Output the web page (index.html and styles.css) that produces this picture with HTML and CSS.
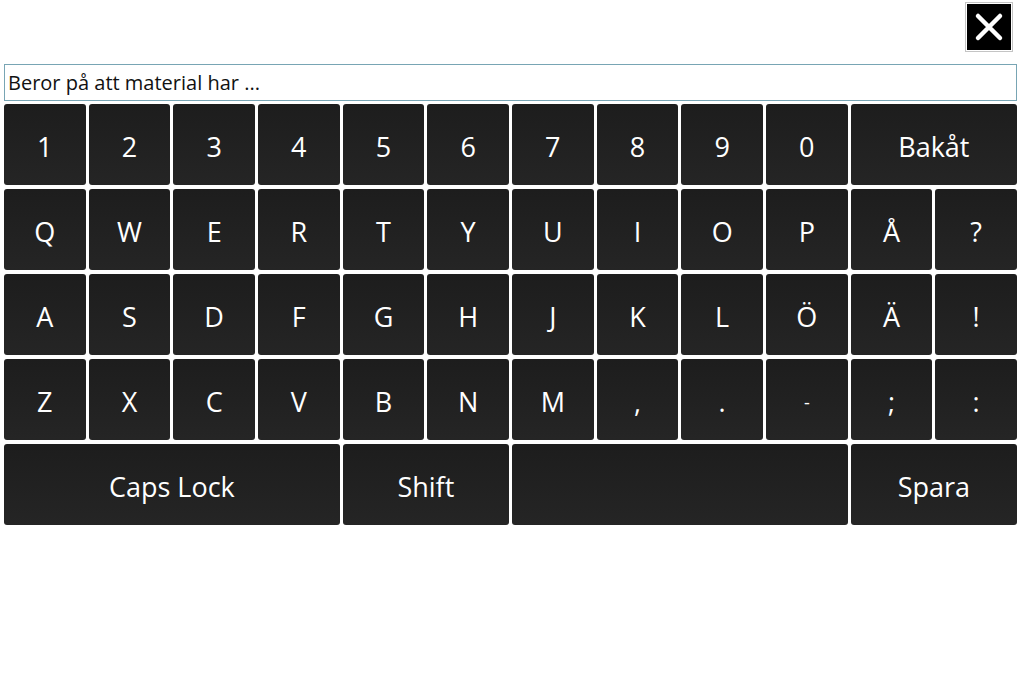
FILE: index.html
```html
<!DOCTYPE html>
<html>

<head>
    <title>Tangentbord</title>
    <link rel="stylesheet" href="styles.css">
</head>

<body>
    <div class="top">
        <button class="close" aria-label="Stäng">
            <svg width="32" height="32" viewBox="0 0 32 32">
                <path d="M5 5 L27 27 M27 5 L5 27" stroke="#fff" stroke-width="4.5" stroke-linecap="round" />
            </svg>
        </button>
    </div>

    <input class="field" value="Beror på att material har ..." />

    <div class="keyboard">
        <div class="key">1</div>
        <div class="key">2</div>
        <div class="key">3</div>
        <div class="key">4</div>
        <div class="key">5</div>
        <div class="key">6</div>
        <div class="key">7</div>
        <div class="key">8</div>
        <div class="key">9</div>
        <div class="key">0</div>
        <div class="key span2">Bakåt</div>

        <div class="key">Q</div>
        <div class="key">W</div>
        <div class="key">E</div>
        <div class="key">R</div>
        <div class="key">T</div>
        <div class="key">Y</div>
        <div class="key">U</div>
        <div class="key">I</div>
        <div class="key">O</div>
        <div class="key">P</div>
        <div class="key">Å</div>
        <div class="key">?</div>

        <div class="key">A</div>
        <div class="key">S</div>
        <div class="key">D</div>
        <div class="key">F</div>
        <div class="key">G</div>
        <div class="key">H</div>
        <div class="key">J</div>
        <div class="key">K</div>
        <div class="key">L</div>
        <div class="key">Ö</div>
        <div class="key">Ä</div>
        <div class="key">!</div>

        <div class="key">Z</div>
        <div class="key">X</div>
        <div class="key">C</div>
        <div class="key">V</div>
        <div class="key">B</div>
        <div class="key">N</div>
        <div class="key">M</div>
        <div class="key">,</div>
        <div class="key">.</div>
        <div class="key small">-</div>
        <div class="key">;</div>
        <div class="key">:</div>

        <div class="key span4">Caps Lock</div>
        <div class="key span2">Shift</div>
        <div class="key span4"></div>
        <div class="key span2">Spara</div>
    </div>
</body>

</html>
```

FILE: styles.css
```css
body {
    margin: 0;
    padding: 2px 4px 3px;
    background: #fff;
    font-family: "Open Sans", "Noto Sans", sans-serif;
}

.top {
    display: flex;
    justify-content: flex-end;
    padding-right: 4px;
}

.close {
    width: 48px;
    height: 50px;
    padding: 1px;
    border: 1px solid #c4c4c4;
    background: #000;
    background-clip: content-box;
    display: flex;
    align-items: center;
    justify-content: center;
    cursor: pointer;
}

.field {
    display: block;
    box-sizing: border-box;
    width: 100%;
    height: 37px;
    margin-top: 12px;
    padding: 0 3px;
    border: 1px solid #78a5b4;
    font-family: "Open Sans", "Noto Sans", sans-serif;
    font-size: 20px;
    color: #111;
}

.field:focus {
    outline: none;
}

.keyboard {
    display: grid;
    grid-template-columns: repeat(12, 1fr);
    grid-auto-rows: 81px;
    column-gap: 3px;
    row-gap: 4px;
    margin-top: 3px;
}

.key {
    display: flex;
    align-items: center;
    justify-content: center;
    padding-top: 4px;
    box-sizing: border-box;
    border-radius: 3px;
    background: linear-gradient(#1d1d1d, #252525);
    color: #fff;
    font-size: 27px;
    user-select: none;
}

.key.small {
    font-size: 18px;
}

.span2 {
    grid-column: span 2;
}

.span4 {
    grid-column: span 4;
}
```
